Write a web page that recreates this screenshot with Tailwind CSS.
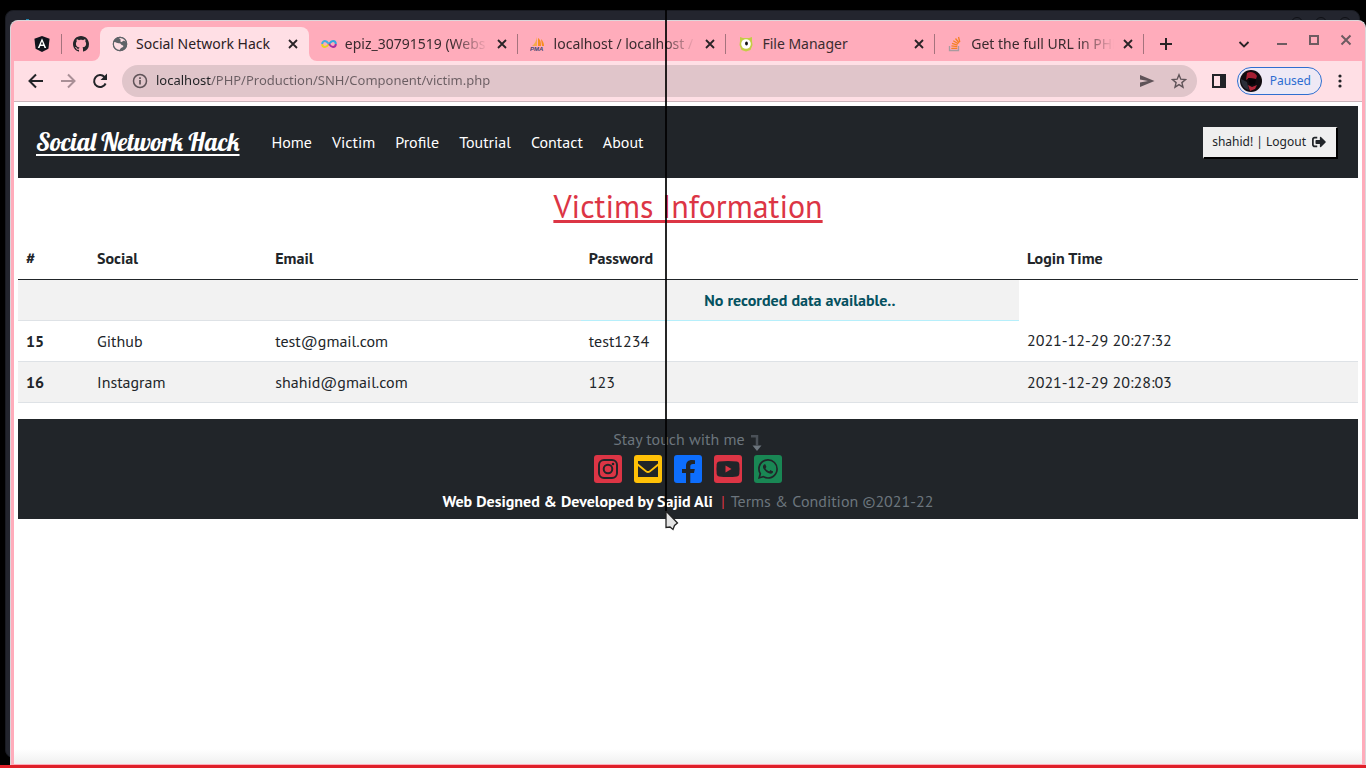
<!DOCTYPE html>
<html lang="en">
<head>
<meta charset="utf-8">
<meta name="viewport" content="width=device-width, initial-scale=1">
<title>Social Network Hack</title>
<script src="https://cdn.jsdelivr.net/npm/@tailwindcss/browser@4"></script>
</head>
<body class="relative flex h-screen flex-col overflow-hidden bg-black font-['Noto_Sans','Open_Sans',sans-serif] text-[#212529]">
  <!-- window behind -->
  <div class="absolute top-[10px] right-[6px] bottom-[10px] left-[5px] rounded-lg border border-[#191b22] bg-[#23252e]" aria-hidden="true">
    <span class="absolute top-[6px] right-[8px] size-3 rounded-full border border-[#101116]"></span>
    <span class="absolute top-[6px] right-[32px] size-3 rounded-full border border-[#101116]"></span>
    <span class="absolute top-[6px] right-[56px] size-3 rounded-full border border-[#101116]"></span>
    <span class="absolute top-[8px] left-[20px] h-px w-[3px] bg-[#2487ad]"></span>
  </div>

  <div class="relative mt-5 ml-[10px] flex min-h-0 flex-1 flex-col rounded-t-lg border border-b-0 border-[#dcd6da] bg-[#ffacbb] px-[3px] pb-px">
    <!-- tab strip -->
    <div class="flex h-10 shrink-0 pt-[6px] text-sm text-[#3a2b2f]">
      <button class="flex h-[34px] w-[47px] items-center justify-end pr-[11px]" aria-label="Angular">
        <svg class="size-4" viewBox="0 0 16 16"><path d="M8 0l7.6 2.7-1.2 10L8 16l-6.4-3.3L.4 2.7z" fill="#11131c"/><path d="M8 2.2L3.8 12h1.700l.8-2.100h3.400l.8 2.100h1.700zM8 5.600l1.200 3H6.800z" fill="#fff"/></svg>
      </button>
      <span class="mt-[7px] h-5 w-px bg-[#a5737d]"></span>
      <button class="flex h-[34px] w-[38px] items-center justify-center" aria-label="GitHub">
        <svg class="size-4" viewBox="0 0 16 16" fill="#25262a"><path d="M8 0C3.580 0 0 3.580 0 8c0 3.540 2.290 6.530 5.470 7.590.4.070.55-.17.55-.38 0-.19-.01-.82-.01-1.490-2.010.37-2.530-.49-2.690-.94-.09-.23-.48-.94-.82-1.130-.28-.15-.68-.52-.01-.53.63-.01 1.080.58 1.230.82.72 1.210 1.870.87 2.330.66.07-.52.28-.87.51-1.070-1.780-.2-3.640-.89-3.640-3.950 0-.87.31-1.590.82-2.150-.08-.2-.36-1.020.08-2.120 0 0 .67-.21 2.200.82.64-.18 1.320-.27 2-.27s1.360.09 2 .27c1.530-1.040 2.200-.82 2.200-.82.44 1.100.16 1.920.08 2.120.51.56.82 1.270.82 2.150 0 3.070-1.870 3.750-3.650 3.950.29.25.54.73.54 1.480 0 1.070-.01 1.930-.01 2.200 0 .21.15.46.55.38A8.010 8.010 0 0016 8c0-4.420-3.580-8-8-8z"/></svg>
      </button>
      <div class="flex min-w-0 flex-1">
        <div class="relative flex h-[34px] min-w-0 basis-1/5 items-center rounded-t-lg bg-[#ffdfe5] pr-[10px] pl-3 text-[#2b2023]">
          <svg class="mr-2 size-4 shrink-0" viewBox="0 0 16 16"><circle cx="8" cy="8" r="7.200" fill="#5f6368"/><path d="M2 6c2-.5 3 1.500 5 1.200s2 1.800 3.500 2 1 2-.5 2.300-2 1.800-2.500 3C4 14 1.500 11 1.500 8zM6.500 1.500C7 3 9 2.500 8.500 4.500S10 6 11 5s2.500.5 3.200.5C13.500 3.500 11.500 1.300 8 1.200z" fill="#ffdfe5"/><circle cx="8" cy="8" r="6.700" fill="none" stroke="#5f6368" stroke-width="1.200"/></svg>
          <span class="min-w-0 flex-1 overflow-hidden whitespace-nowrap">Social Network Hack</span>
          <button class="shrink-0" aria-label="Close tab"><svg class="size-3" viewBox="0 0 12 12" stroke="#292326" stroke-width="1.800"><path d="M2 2l8 8M10 2l-8 8"/></svg></button>
          <svg class="absolute bottom-0 -left-2 size-2" viewBox="0 0 8 8" fill="#ffdfe5"><path d="M8 0v8H0a8 8 0 008-8z"/></svg>
          <svg class="absolute -right-2 bottom-0 size-2" viewBox="0 0 8 8" fill="#ffdfe5"><path d="M0 0v8h8a8 8 0 01-8-8z"/></svg>
        </div>
        <div class="flex h-[34px] min-w-0 basis-1/5 items-center pl-3">
          <svg class="mr-2 size-4 shrink-0" viewBox="0 0 16 16" fill="none" stroke-width="2"><path d="M8 8C6 5.500 5 5 4 5S1.200 5.800 1.200 8" stroke="#43aede"/><path d="M1.200 8c0 2 1.500 3 2.800 3s2.500-1 4-3" stroke="#e5d51e"/><path d="M8 8c1.500-2 2.700-3 4-3s2.800 1 2.800 3" stroke="#2fa7dd"/><path d="M14.800 8c0 2-1.500 3-2.800 3S9.500 10 8 8" stroke="#a82ea0"/></svg>
          <span class="min-w-0 flex-1 overflow-hidden whitespace-nowrap [mask-image:linear-gradient(to_right,#000_75%,transparent)]">epiz_30791519 (Webs</span>
          <button class="mr-[9px] ml-2 shrink-0" aria-label="Close tab"><svg class="size-3" viewBox="0 0 12 12" stroke="#292326" stroke-width="1.800"><path d="M2 2l8 8M10 2l-8 8"/></svg></button>
          <span class="h-5 w-px bg-[#a5737d]"></span>
        </div>
        <div class="flex h-[34px] min-w-0 basis-1/5 items-center pl-3">
          <svg class="mr-2 size-4 shrink-0" viewBox="0 0 16 16"><path d="M7 1v9H2c3-2 4-5 5-9z" fill="#f6a94b"/><path d="M8 2c3 2 3 5 3 8H8zM11 3c2 2 3 4 3 7h-2z" fill="#f78d1e"/><text x="0" y="15" font-size="6" font-weight="bold" font-style="italic" font-family="Liberation Sans, sans-serif" fill="#42456f">PMA</text></svg>
          <span class="min-w-0 flex-1 overflow-hidden whitespace-nowrap [mask-image:linear-gradient(to_right,#000_75%,transparent)]">localhost / localhost /</span>
          <button class="mr-[9px] ml-2 shrink-0" aria-label="Close tab"><svg class="size-3" viewBox="0 0 12 12" stroke="#292326" stroke-width="1.800"><path d="M2 2l8 8M10 2l-8 8"/></svg></button>
          <span class="h-5 w-px bg-[#a5737d]"></span>
        </div>
        <div class="flex h-[34px] min-w-0 basis-1/5 items-center pl-3">
          <svg class="mr-2 size-4 shrink-0" viewBox="0 0 16 16"><path d="M2 1l3 1h6l3-1v4l.5 4-2 5-4.500 1.500L3.500 14l-2-5L2 5z" fill="#c4cc45"/><circle cx="8" cy="8" r="4.800" fill="#fff"/><ellipse cx="8.500" cy="7.500" rx="1.400" ry="2" fill="#111"/></svg>
          <span class="min-w-0 flex-1 overflow-hidden whitespace-nowrap">File Manager</span>
          <button class="mr-[9px] ml-2 shrink-0" aria-label="Close tab"><svg class="size-3" viewBox="0 0 12 12" stroke="#292326" stroke-width="1.800"><path d="M2 2l8 8M10 2l-8 8"/></svg></button>
          <span class="h-5 w-px bg-[#a5737d]"></span>
        </div>
        <div class="flex h-[34px] min-w-0 basis-1/5 items-center pl-3">
          <svg class="mr-2 size-4 shrink-0" viewBox="0 0 16 16" fill="none"><path d="M2.500 10v4.500h9V10" stroke="#a99a9f" stroke-width="1.300"/><path d="M4.300 12.300h6M4.400 9.900l5.900.7M5 7.300l5.600 1.800M6.300 4.800l4.900 3M8.500 2.500l3.600 4.500M11.500 1l1.300 5" stroke="#f48024" stroke-width="1.300"/></svg>
          <span class="min-w-0 flex-1 overflow-hidden whitespace-nowrap [mask-image:linear-gradient(to_right,#000_75%,transparent)]">Get the full URL in PHP</span>
          <button class="mr-[9px] ml-2 shrink-0" aria-label="Close tab"><svg class="size-3" viewBox="0 0 12 12" stroke="#292326" stroke-width="1.800"><path d="M2 2l8 8M10 2l-8 8"/></svg></button>
          <span class="h-5 w-px bg-[#a5737d]"></span>
        </div>
      </div>
      <div class="flex h-[34px] w-[218px] shrink-0 items-center pl-4 text-[#292326]">
        <button aria-label="New tab"><svg class="size-3" viewBox="0 0 12 12" stroke="currentColor" stroke-width="2"><path d="M6 0v12M0 6h12"/></svg></button>
        <button class="ml-[66px]" aria-label="Search tabs"><svg class="size-3" viewBox="0 0 12 12" fill="none" stroke="currentColor" stroke-width="1.800"><path d="M1.500 4L6 8.500 10.500 4"/></svg></button>
        <div class="mb-2 ml-[26px] flex gap-5 text-[#6d5b61]">
          <button aria-label="Minimize"><svg class="size-3" viewBox="0 0 12 12" stroke="currentColor" stroke-width="2"><path d="M1 10h10"/></svg></button>
          <button aria-label="Maximize"><svg class="size-3" viewBox="0 0 12 12" fill="none" stroke="currentColor" stroke-width="2"><path d="M2 2h8v8H2z"/></svg></button>
          <button aria-label="Close"><svg class="size-3" viewBox="0 0 12 12" stroke="currentColor" stroke-width="2"><path d="M1.500 1.500l9 9M10.500 1.500l-9 9"/></svg></button>
        </div>
      </div>
    </div>

    <!-- toolbar -->
    <div class="flex h-[41px] shrink-0 items-center border-b border-[#cbb4ba] bg-[#ffdfe5] pr-[14px] pl-3 text-[#222327]">
      <button aria-label="Back"><svg class="size-5" viewBox="0 0 20 20" fill="none" stroke="currentColor" stroke-width="2"><path d="M17 10H4M10 3.500L3.500 10l6.500 6.500"/></svg></button>
      <button class="ml-3 text-[#a98f96]" aria-label="Forward"><svg class="size-5" viewBox="0 0 20 20" fill="none" stroke="currentColor" stroke-width="2"><path d="M3 10h13M10 3.500l6.500 6.500-6.500 6.500"/></svg></button>
      <button class="ml-3" aria-label="Reload"><svg class="size-5" viewBox="0 0 20 20"><path d="M15.600 12.500A6 6 0 1114.500 6" fill="none" stroke="currentColor" stroke-width="2"/><path d="M17 2.500V9h-6.500z" fill="currentColor"/></svg></button>
      <div class="ml-3 flex h-8 min-w-0 flex-1 items-center rounded-full bg-[#e0c5ca] pr-[10px] pl-[10px] text-[#5f5358]">
        <svg class="size-4" viewBox="0 0 16 16" fill="none" stroke="currentColor" stroke-width="1.500"><circle cx="8" cy="8" r="6.500"/><path d="M8 7v4.500M8 4.300V6" stroke-width="1.700"/></svg>
        <input class="ml-2 min-w-0 flex-1 bg-[linear-gradient(to_right,#202124_55px,#6a5d62_55px)] bg-clip-text text-[13px] text-transparent outline-none" aria-label="Address" value="localhost/PHP/Production/SNH/Component/victim.php">
        <button aria-label="Share"><svg class="size-4" viewBox="0 0 16 16" fill="currentColor"><path d="M1 2l14.500 6L1 14V9.500L9 8 1 6.500z"/></svg></button>
        <button class="ml-4" aria-label="Bookmark"><svg class="size-4" viewBox="0 0 16 16" fill="none" stroke="currentColor" stroke-width="1.400"><path d="M8 1.800l1.800 4.400 4.700.4-3.600 3 1.100 4.600L8 11.700l-4 2.500 1.100-4.600-3.600-3 4.700-.4z"/></svg></button>
      </div>
      <button class="ml-[14px]" aria-label="Side panel"><svg class="size-4" viewBox="0 0 16 16" fill="currentColor"><path fill-rule="evenodd" d="M1 1h14v14H1zM3 3v10h6V3z"/></svg></button>
      <button class="ml-[10px] flex h-7 items-center rounded-full border border-[#2f6fd0] bg-[#eee9f5] pr-[10px] pl-[2px] text-xs text-[#2c6dd1]">
        <svg class="mr-2 size-[22px]" viewBox="0 0 22 22"><circle cx="11" cy="11" r="11" fill="#100b0f"/><path d="M7 3c3-2 8-1 10 3l-1 3-7-1-3 2z" fill="#a51f32"/><path d="M1 9l6 3 2 8c-5-1-8-5-8-11z" fill="#2b2e39"/><path d="M8 15l4 2 5-2-2 4-5 2z" fill="#b3283a"/><path d="M8 8l8 1-1 5-5 1z" fill="#050306"/></svg>Paused</button>
      <button class="ml-[10px]" aria-label="Menu"><svg class="size-4" viewBox="0 0 16 16" fill="currentColor"><circle cx="8" cy="3" r="1.600"/><circle cx="8" cy="8" r="1.600"/><circle cx="8" cy="13" r="1.600"/></svg></button>
    </div>

    <!-- page -->
    <main class="min-h-0 flex-1 overflow-hidden bg-white bg-[linear-gradient(to_top,#f0f0f0,#fff_15px)] p-1 font-['PT_Sans','Noto_Sans',sans-serif] text-base">
      <nav class="flex h-[72px] items-center bg-[#212529] pr-5 pl-[18px] text-white">
        <a href="#" class="font-['Lobster','Liberation_Serif',serif] text-[25px] underline decoration-2 underline-offset-3">Social Network Hack</a>
        <div class="ml-8 flex flex-1 gap-5">
          <a href="#">Home</a><a href="#">Victim</a><a href="#">Profile</a><a href="#">Toutrial</a><a href="#">Contact</a><a href="#">About</a>
        </div>
        <button class="mt-px flex h-8 items-center gap-[6px] border-t border-r-2 border-b-2 border-l border-t-[#efefef] border-r-black border-b-black border-l-[#efefef] bg-[#efefef] pr-[10px] pl-2 font-['Noto_Sans',sans-serif] text-xs text-[#212529]">shahid! | Logout
          <svg class="size-[14px]" viewBox="0 0 512 512" fill="currentColor"><path d="M497 273L329 441c-15 15-41 4.500-41-17v-96H152c-13.300 0-24-10.700-24-24v-96c0-13.300 10.700-24 24-24h136V88c0-21.400 25.900-32 41-17l168 168c9.300 9.400 9.300 24.600 0 34zM192 436v-40c0-6.600-5.400-12-12-12H96c-17.700 0-32-14.300-32-32V160c0-17.700 14.300-32 32-32h84c6.600 0 12-5.400 12-12V76c0-6.600-5.400-12-12-12H96c-53 0-96 43-96 96v192c0 53 43 96 96 96h84c6.600 0 12-5.400 12-12z"/></svg></button>
      </nav>
      <h2 class="pt-2 pb-3 text-center text-[32px] leading-10 text-[#dc3545] underline">Victims Information</h2>
      <table class="w-full table-fixed border-collapse text-left">
        <colgroup><col class="w-[5.3%]"><col class="w-[13.3%]"><col class="w-[23.4%]"><col class="w-[32.7%]"><col></colgroup>
        <thead>
          <tr class="h-[41px] border-b border-[#212529] *:px-2 *:font-bold"><th>#</th><th>Social</th><th>Email</th><th>Password</th><th>Login Time</th></tr>
        </thead>
        <tbody class="*:h-[41px]">
          <tr class="*:bg-[#f2f2f2]"><td class="border-b border-[#dee2e6]"></td><td class="border-b border-[#dee2e6]"></td><td class="border-b border-[#dee2e6]"></td><th class="border-b border-[#b6effb] text-center font-bold text-[#055160]">No recorded data available..</th></tr>
          <tr class="border-b border-[#dee2e6] *:px-2"><th class="font-bold">15</th><td>Github</td><td>test@gmail.com</td><td>test1234</td><td>2021-12-29 20:27:32</td></tr>
          <tr class="border-b border-[#dee2e6] bg-[#f2f2f2] *:px-2"><th class="font-bold">16</th><td>Instagram</td><td>shahid@gmail.com</td><td>123</td><td>2021-12-29 20:28:03</td></tr>
        </tbody>
      </table>
      <footer class="mt-4 flex h-[100px] flex-col items-center bg-[#212529] pt-2 text-[#6c757d]">
        <p class="flex h-6 items-center gap-[6px]">Stay touch with me
          <svg class="mt-2 h-4 w-3" viewBox="0 0 12 16"><path d="M0 1.200h6v9" fill="none" stroke="#4a5057" stroke-width="2.500"/><path d="M1.500 10.500h9L6 16z" fill="#6c757d"/></svg>
        </p>
        <div class="mt-1 flex gap-3">
          <a href="#" aria-label="Instagram"><svg class="size-7" viewBox="0 0 28 28"><rect width="28" height="28" rx="3" fill="#dc3545"/><g fill="none" stroke="#212529" stroke-width="2"><rect x="5" y="5" width="18" height="18" rx="5"/><circle cx="14" cy="14" r="4.300"/></g><circle cx="19" cy="9" r="1.300" fill="#212529"/></svg></a>
          <a href="#" aria-label="Email"><svg class="size-7" viewBox="0 0 28 28"><rect width="28" height="28" rx="3" fill="#ffc107"/><path d="M4 6h20v2.500l-8.500 7q-1.500 1-3 0L4 8.500zM4 11l7.500 6q2.500 1.800 5 0L24 11v11H4z" fill="#212529"/></svg></a>
          <a href="#" aria-label="Facebook"><svg class="size-7" viewBox="0 0 28 28"><rect width="28" height="28" rx="3" fill="#0d6efd"/><path d="M12 28V18H8v-4h4v-3c0-4 2.300-6 6-6l3 .3V9h-2c-2 0-2.700 1-2.700 2.500V14h4.500l-.8 4h-3.700v10z" fill="#212529"/></svg></a>
          <a href="#" aria-label="YouTube"><svg class="size-7" viewBox="0 0 28 28"><rect width="28" height="28" rx="3" fill="#dc3545"/><path d="M5 6.500q9-1 18 0 2 .3 2.300 2.500.5 5 0 10-.3 2.200-2.300 2.500-9 1-18 0-2-.3-2.300-2.500-.5-5 0-10Q3 6.800 5 6.500z" fill="#212529"/><path d="M11.500 10.500v7l6-3.500z" fill="#dc3545"/></svg></a>
          <a href="#" aria-label="WhatsApp"><svg class="size-7" viewBox="0 0 28 28"><rect width="28" height="28" rx="3" fill="#198754"/><g transform="translate(4 4) scale(1.250)" fill="#212529"><path d="M13.601 2.326A7.854 7.854 0 007.994 0C3.627 0 .068 3.558.064 7.926c0 1.399.366 2.760 1.057 3.965L0 16l4.204-1.102a7.933 7.933 0 003.790.965h.004c4.368 0 7.926-3.558 7.930-7.930A7.898 7.898 0 0013.600 2.326zM7.994 14.521a6.573 6.573 0 01-3.356-.920l-.240-.144-2.494.654.666-2.433-.156-.251a6.560 6.560 0 01-1.007-3.505c0-3.626 2.957-6.584 6.591-6.584a6.560 6.560 0 014.660 1.931 6.557 6.557 0 011.928 4.660c-.004 3.639-2.961 6.592-6.592 6.592zm3.615-4.934c-.197-.099-1.170-.578-1.353-.646-.182-.065-.315-.099-.445.099-.133.197-.513.646-.627.775-.114.133-.232.148-.430.050-.197-.100-.836-.308-1.592-.985-.590-.525-.985-1.175-1.103-1.372-.114-.198-.011-.304.088-.403.087-.088.197-.232.296-.346.100-.114.133-.198.198-.330.065-.134.034-.248-.015-.347-.050-.099-.445-1.076-.612-1.470-.160-.389-.323-.335-.445-.340-.114-.007-.247-.007-.380-.007a.729.729 0 00-.529.247c-.182.198-.691.677-.691 1.654 0 .977.710 1.916.810 2.049.098.133 1.394 2.132 3.383 2.992.470.205.840.326 1.129.418.475.152.904.129 1.246.080.380-.058 1.171-.480 1.338-.943.164-.464.164-.860.114-.943-.049-.084-.182-.133-.380-.232z"/></g></svg></a>
        </div>
        <p class="mt-[6px] leading-6"><a href="#" class="font-bold text-white">Web Designed &amp; Developed by Sajid Ali</a> <span class="mr-[2px] ml-1 text-[#dc3545]">|</span> <a href="#">Terms &amp; Condition ©2021-22</a></p>
      </footer>
    </main>
  </div>
  <div class="relative h-[3px] shrink-0 bg-[#df2029]"></div>

  <!-- pointer and guide line -->
  <div class="pointer-events-none absolute top-[10px] left-[665px]" aria-hidden="true">
    <div class="h-[501px] w-[2px] bg-black/85"></div>
    <svg class="h-5 w-[14px]" viewBox="0 0 14 20"><path d="M1 0v16.500l4-.5 3 2.500 1.500-4 3-2.500z" fill="#e4e4e4" stroke="#222" stroke-width="1.300"/></svg>
  </div>
</body>
</html>
